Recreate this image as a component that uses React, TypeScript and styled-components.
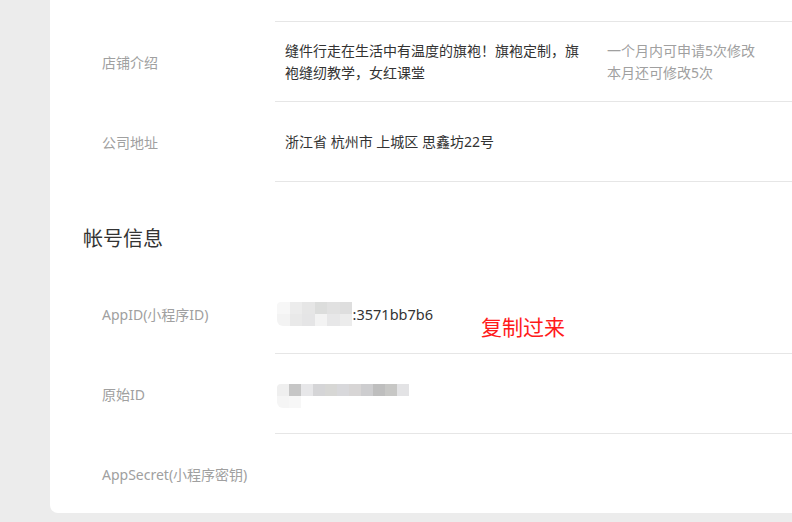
import React from 'react';
import styled, { createGlobalStyle } from 'styled-components';

const GlobalStyle = createGlobalStyle`
  html, body {
    margin: 0;
    padding: 0;
    background: #ececec;
    font-family: 'Noto Sans', 'Noto Sans CJK SC', sans-serif;
  }
`;

// 마스킹 처리된 값 (모자이크 색)
const appIdMosaic = [
  ['#f7f7f7', '#ececec', '#e6e6e6', '#dcdddc', '#e1e1e1', '#dedede'],
  ['#f3f3f3', '#e9e9e9', '#e5e5e6', '#f3f3f3', '#e7e7e8', '#ececec'],
];

const originIdMosaic = [
  ['#efefef', '#c6c6c6', '#e7e7e9', '#d5d5d7', '#d7d7d5', '#d8d8db', '#d7d5d5', '#cdcdcf', '#bebebe', '#c7c7c5', '#e3e3e5'],
  ['#f5f5f5', '#f7f7f7', '#ffffff', '#ffffff', '#ffffff', '#ffffff', '#ffffff', '#ffffff', '#ffffff', '#ffffff', '#ffffff'],
];

function Mosaic({ cells, size }: { cells: string[][]; size: number }) {
  return (
    <S.MosaicGrid $cols={cells[0].length} $size={size}>
      {cells.flat().map((c, i) => (
        <S.MosaicCell key={i} $color={c} />
      ))}
    </S.MosaicGrid>
  );
}

function App() {
  return (
    <>
      <GlobalStyle />
      <S.Page>
        <S.Card>
          <S.Row $height={22}>
            <S.Label />
            <S.Content $bordered />
          </S.Row>
          <S.Row>
            <S.Label>店铺介绍</S.Label>
            <S.Content $bordered>
              <S.Value>缝件行走在生活中有温度的旗袍！旗袍定制，旗袍缝纫教学，女红课堂</S.Value>
              <S.Note>
                一个月内可申请5次修改
                <br />
                本月还可修改5次
              </S.Note>
            </S.Content>
          </S.Row>
          <S.Row>
            <S.Label>公司地址</S.Label>
            <S.Content $bordered>
              <S.Value>浙江省 杭州市 上城区 思鑫坊22号</S.Value>
            </S.Content>
          </S.Row>
          <S.SectionTitle>帐号信息</S.SectionTitle>
          <S.Row>
            <S.Label>AppID(小程序ID)</S.Label>
            <S.Content $bordered>
              <S.MaskedValue>
                <Mosaic cells={appIdMosaic} size={12.5} />
                <S.IdText>:3571bb7b6</S.IdText>
              </S.MaskedValue>
              <S.Annotation>复制过来</S.Annotation>
            </S.Content>
          </S.Row>
          <S.Row>
            <S.Label>原始ID</S.Label>
            <S.Content $bordered>
              <S.MaskedValue $offset={4}>
                <Mosaic cells={originIdMosaic} size={12} />
              </S.MaskedValue>
            </S.Content>
          </S.Row>
          <S.Row $height={79}>
            <S.Label>AppSecret(小程序密钥)</S.Label>
            <S.Content />
          </S.Row>
        </S.Card>
      </S.Page>
    </>
  );
}

const S = {
  Page: styled.div`
    width: 792px;
    height: 522px;
    overflow: hidden;
    background: #ececec;
  `,
  Card: styled.div`
    margin-left: 50px;
    width: 760px;
    background: #ffffff;
    border-bottom-left-radius: 8px;
    display: flex;
    flex-direction: column;
  `,
  Row: styled.div<{ $height?: number }>`
    display: flex;
    height: ${(p) => p.$height ?? 80}px;
  `,
  Label: styled.div`
    width: 225px;
    flex-shrink: 0;
    box-sizing: border-box;
    padding-left: 52px;
    display: flex;
    align-items: center;
    font-size: 14px;
    color: #a0a0a0;
  `,
  Content: styled.div<{ $bordered?: boolean }>`
    flex: 1;
    display: flex;
    align-items: center;
    padding-left: 10px;
    border-bottom: ${(p) => (p.$bordered ? '1px solid #e6e6e6' : 'none')};
  `,
  Value: styled.div`
    width: 300px;
    font-size: 14px;
    line-height: 22px;
    color: #333333;
  `,
  Note: styled.div`
    margin-left: 22px;
    font-size: 14px;
    line-height: 22px;
    color: #a0a0a0;
  `,
  SectionTitle: styled.div`
    height: 92px;
    box-sizing: border-box;
    padding: 43px 0 0 33px;
    font-size: 20px;
    line-height: 28px;
    color: #333333;
  `,
  MaskedValue: styled.div<{ $offset?: number }>`
    display: flex;
    align-items: center;
    width: 156px;
    margin-left: -8px;
    margin-top: ${(p) => p.$offset ?? 0}px;
    font-size: 14px;
    color: #333333;
  `,
  IdText: styled.span`
    margin-left: 1px;
    font-size: 14.5px;
  `,
  MosaicGrid: styled.div<{ $cols: number; $size: number }>`
    display: grid;
    grid-template-columns: repeat(${(p) => p.$cols}, ${(p) => p.$size}px);
    grid-auto-rows: 12px;
    border-radius: 4px 0 0 6px;
    overflow: hidden;
  `,
  MosaicCell: styled.div<{ $color: string }>`
    background: ${(p) => p.$color};
  `,
  Annotation: styled.div`
    align-self: flex-start;
    margin: 39px 0 0 48px;
    font-size: 21px;
    line-height: 28px;
    color: #ff1a1a;
  `,
};

export default App;
